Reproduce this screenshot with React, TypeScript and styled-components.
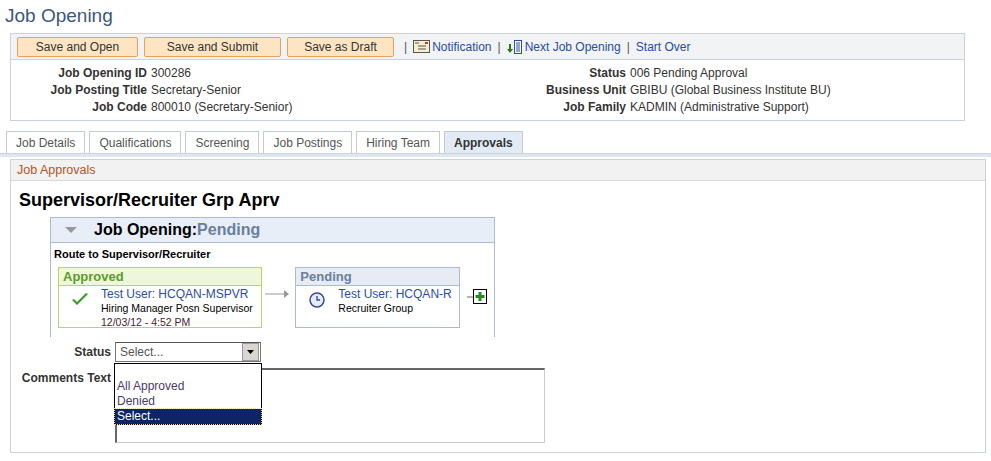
import React from "react";
import styled, { createGlobalStyle } from "styled-components";

const Global = createGlobalStyle`
  body { margin: 0; background: #fff; font-family: Arial, "Liberation Sans", sans-serif; font-size: 12px; color: #333; }
`;

const Page = styled.div`width: 991px; height: 461px; overflow: hidden; position: relative;`;
const Title = styled.div`font-size: 19px; color: #3d5878; padding: 5px 0 0 5px; height: 33px; box-sizing: border-box;`;
const HeaderBox = styled.div`margin: 0 26px 0 10px; border: 1px solid #cbd2da; height: 88px; box-sizing: border-box;`;
const Toolbar = styled.div`display: flex; align-items: center; height: 25px; background: #f2f3f4; border-bottom: 1px solid #cbd2da; padding-left: 6px; gap: 6px;`;
const Btn = styled.div<{ w: number }>`width: ${p => p.w}px; height: 20px; box-sizing: border-box; background: #fde5c3; border: 1px solid #e7a15c; border-radius: 2px; display: flex; align-items: center; justify-content: center; color: #333; font-size: 12px;`;
const Links = styled.div`display: flex; align-items: center; gap: 6px; color: #2a4e9e; font-size: 12px; margin-left: 4px;`;
const Sep = styled.span`color: #555;`;
const Link = styled.span`display: flex; align-items: center; gap: 2px; color: #2a4d9c;`;
const Info = styled.div`display: grid; grid-template-columns: 136px 330px 141px auto; row-gap: 3px; column-gap: 4px; padding-top: 6px; line-height: 14px; white-space: nowrap;`;
const Lbl = styled.div`text-align: right; font-weight: bold; color: #333;`;
const Val = styled.div`color: #333;`;
const Tabs = styled.div`display: flex; gap: 4px; margin: 10px 0 0 6px; height: 22px; align-items: flex-end;`;
const Tab = styled.div<{ active?: boolean }>`height: 22px; box-sizing: border-box; border: 1px solid #c3ccd6; border-bottom: none; padding: 0 9px; display: flex; align-items: center; font-size: 12px; color: ${p => p.active ? "#333" : "#555"}; font-weight: ${p => p.active ? "bold" : "normal"}; background: ${p => p.active ? "#e2eaf4" : "#fff"};`;
const TabLine = styled.div`height: 3px; background: #dfe6ee; border-top: 1px solid #c9d4e0;`;
const Section = styled.div`margin: 2px 5px 0 10px; border: 1px solid #cbd2da; height: 294px; box-sizing: border-box;`;
const SecHead = styled.div`height: 20px; background: #f2f2f2; border-bottom: 1px solid #d8d8d8; color: #b5542a; font-size: 12.5px; display: flex; align-items: center; padding-left: 6px;`;
const H2 = styled.div`font-size: 18px; font-weight: bold; color: #000; padding: 9px 0 0 8px; height: 36px; box-sizing: border-box;`;
const ApprBox = styled.div`margin-left: 39px; width: 445px; border: 1px solid #a9bcd3; border-bottom: none; height: 120px; box-sizing: border-box;`;
const ApprHead = styled.div`height: 24px; background: #e7eef8; border-bottom: 1px solid #a9bcd3; display: flex; align-items: center; font-size: 16px; font-weight: bold; color: #000;`;
const Tri = styled.div`width: 0; height: 0; border-left: 6px solid transparent; border-right: 6px solid transparent; border-top: 6px solid #999; margin: 0 17px 0 14px;`;
const Pend = styled.span`color: #6a7f9c;`;
const Route = styled.div`font-size: 11px; font-weight: bold; color: #000; padding: 5px 0 0 3px; height: 24px; box-sizing: border-box;`;
const Steps = styled.div`display: flex; align-items: flex-start; padding-left: 7px;`;
const Step = styled.div<{ w: number; border: string }>`width: ${p => p.w}px; height: 61px; box-sizing: border-box; border: 1px solid ${p => p.border};`;
const StepHead = styled.div<{ bg: string; color: string; border: string }>`height: 17px; background: ${p => p.bg}; color: ${p => p.color}; border-bottom: 1px solid ${p => p.border}; font-weight: bold; font-size: 13px; padding-left: 4px; line-height: 17px;`;
const StepBody = styled.div`display: flex; padding-top: 1px;`;
const IconCol = styled.div`width: 42px; display: flex; justify-content: center; padding-top: 5px;`;
const Lines = styled.div`line-height: 14px;`;
const User = styled.div`color: #2a4e9e; font-size: 12px;`;
const Small = styled.div<{ c?: string }>`font-size: 10.5px; color: ${p => p.c || "#000"};`;
const Arrow = styled.div`width: 34px; display: flex; align-items: center; justify-content: center; padding-top: 22px;`;
const Form = styled.div`display: grid; grid-template-columns: 100px auto; column-gap: 4px; row-gap: 6px; padding-top: 5px; position: relative;`;
const FLbl = styled.div`text-align: right; font-weight: bold; color: #333; padding-top: 3px;`;
const Select = styled.div`width: 146px; height: 20px; box-sizing: border-box; border: 1px solid #777; border-top-color: #555; display: flex; align-items: center; justify-content: space-between; padding-left: 4px; color: #555;`;
const SelBtn = styled.div`width: 15px; height: 16px; background: #d8d6d0; border: 1px solid #999; margin-right: 1px; display: flex; align-items: center; justify-content: center;`;
const Textarea = styled.div`width: 430px; height: 75px; box-sizing: border-box; border: 1px solid #ccc; border-top: 2px solid #666; border-left: 2px solid #666;`;
const Drop = styled.div`position: absolute; left: 103px; top: 26px; width: 148px; height: 62px; box-sizing: border-box; border: 1px solid #000; background: #fff; padding-top: 15px; line-height: 15px; font-size: 12px;`;
const Opt = styled.div<{ sel?: boolean }>`padding-left: 2px; color: ${p => p.sel ? "#fff" : "#4a3a6a"}; background: ${p => p.sel ? "#0d2466" : "transparent"}; outline: ${p => p.sel ? "1px dotted #f5d27a" : "none"};`;

export default function App() {
  return (
    <Page>
      <Global />
      <Title>Job Opening</Title>
      <HeaderBox>
        <Toolbar>
          <Btn w={121}>Save and Open</Btn>
          <Btn w={137}>Save and Submit</Btn>
          <Btn w={107}>Save as Draft</Btn>
          <Links>
            <Sep>|</Sep>
            <Link>
              <svg width="17" height="13" viewBox="0 0 17 13"><rect x="0.5" y="0.5" width="16" height="12" fill="#f6eecf" stroke="#555" /><path d="M2 3h4M5 6h8M5 9h8" stroke="#555" /><rect x="12" y="2" width="3" height="2" fill="#c33" /></svg>
              Notification
            </Link>
            <Sep>|</Sep>
            <Link>
              <svg width="16" height="16" viewBox="0 0 16 16"><path d="M3 5v7" stroke="#2a7a1a" strokeWidth="2" /><path d="M0 10l3 4 3-4z" fill="#2a7a1a" /><rect x="7.5" y="1.5" width="7" height="13" fill="#fff" stroke="#2a4e9e" /><path d="M9 4h4M9 6h4M9 8h4M9 10h4M9 12h4" stroke="#2a4e9e" /></svg>
              Next Job Opening
            </Link>
            <Sep>|</Sep>
            <Link>Start Over</Link>
          </Links>
        </Toolbar>
        <Info>
          <Lbl>Job Opening ID</Lbl><Val>300286</Val><Lbl>Status</Lbl><Val>006 Pending Approval</Val>
          <Lbl>Job Posting Title</Lbl><Val>Secretary-Senior</Val><Lbl>Business Unit</Lbl><Val>GBIBU (Global Business Institute BU)</Val>
          <Lbl>Job Code</Lbl><Val>800010 (Secretary-Senior)</Val><Lbl>Job Family</Lbl><Val>KADMIN (Administrative Support)</Val>
        </Info>
      </HeaderBox>
      <Tabs>
        <Tab>Job Details</Tab>
        <Tab>Qualifications</Tab>
        <Tab>Screening</Tab>
        <Tab>Job Postings</Tab>
        <Tab>Hiring Team</Tab>
        <Tab active>Approvals</Tab>
      </Tabs>
      <TabLine />
      <Section>
        <SecHead>Job Approvals</SecHead>
        <H2>Supervisor/Recruiter Grp Aprv</H2>
        <ApprBox>
          <ApprHead><Tri />Job Opening:<Pend>Pending</Pend></ApprHead>
          <Route>Route to Supervisor/Recruiter</Route>
          <Steps>
            <Step w={205} border="#b6d46e">
              <StepHead bg="#eef8d8" color="#5d9a2e" border="#b6d46e">Approved</StepHead>
              <StepBody>
                <IconCol>
                  <svg width="18" height="15" viewBox="0 0 18 15"><path d="M1 8l5 5L17 2l-2-1-9 9-3-3z" fill="#3a9a2a" /></svg>
                </IconCol>
                <Lines>
                  <User>Test User: HCQAN-MSPVR</User>
                  <Small>Hiring Manager Posn Supervisor</Small>
                  <Small c="#4a1a3a">12/03/12 - 4:52 PM</Small>
                </Lines>
              </StepBody>
            </Step>
            <Arrow>
              <svg width="26" height="10" viewBox="0 0 26 10"><path d="M0 5h20" stroke="#999" /><path d="M19 1l5 4-5 4z" fill="#999" /></svg>
            </Arrow>
            <Step w={166} border="#a9bcd3">
              <StepHead bg="#e7ebf2" color="#6a7f9c" border="#a9bcd3">Pending</StepHead>
              <StepBody>
                <IconCol>
                  <svg width="16" height="16" viewBox="0 0 16 16"><circle cx="8" cy="8" r="7" fill="#e6ebf7" stroke="#3a4a8a" strokeWidth="1.5" /><path d="M8 4v4h3" stroke="#3a4a8a" strokeWidth="1.3" fill="none" /></svg>
                </IconCol>
                <Lines>
                  <User>Test User: HCQAN-R</User>
                  <Small>Recruiter Group</Small>
                </Lines>
              </StepBody>
            </Step>
            <Arrow>
              <svg width="20" height="16" viewBox="0 0 20 16"><path d="M0 8h6" stroke="#666" /><rect x="6.5" y="0.5" width="13" height="14" fill="#fff" stroke="#000" /><path d="M13 3v9M8.5 7.5h9" stroke="#2a8a2a" strokeWidth="3" /></svg>
            </Arrow>
          </Steps>
        </ApprBox>
        <Form>
          <FLbl>Status</FLbl>
          <Select>Select...<SelBtn><svg width="7" height="4" viewBox="0 0 7 4"><path d="M0 0h7L3.5 4z" fill="#000" /></svg></SelBtn></Select>
          <FLbl>Comments Text</FLbl>
          <Textarea />
          <Drop>
            <Opt>All Approved</Opt>
            <Opt>Denied</Opt>
            <Opt sel>Select...</Opt>
          </Drop>
        </Form>
      </Section>
    </Page>
  );
}
